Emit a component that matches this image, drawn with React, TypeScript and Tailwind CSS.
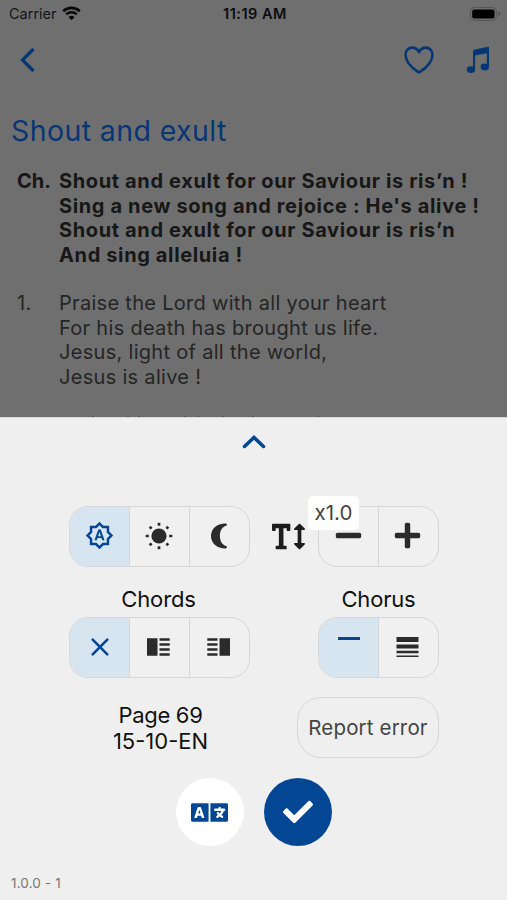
import type { ReactNode } from "react";
import clsx from "clsx";
import { FaCheck, FaLanguage, FaMinus, FaPlus, FaTextHeight } from "react-icons/fa";
import { IoHeartOutline } from "react-icons/io5";
import { MdOutlineBrightnessAuto } from "react-icons/md";

const CHORUS = [
  "Shout and exult for our Saviour is ris’n !",
  "Sing a new song and rejoice : He's alive !",
  "Shout and exult for our Saviour is ris’n",
  "And sing alleluia !",
];

const VERSE = [
  "Praise the Lord with all your heart",
  "For his death has brought us life.",
  "Jesus, light of all the world,",
  "Jesus is alive !",
];

function StatusBar() {
  return (
    <div className="grid h-7 grid-cols-3 items-center pl-[9px] pr-[6px] text-[14.5px] text-[#151515]">
      <div className="flex items-center gap-[5px]">
        <span>Carrier</span>
        <svg width="19" height="15" viewBox="0 0 19 15" fill="none" stroke="#080808" className="-mt-0.5">
          <path d="M1.2 5.2a12 12 0 0 1 16.6 0" strokeWidth="2.6" />
          <path d="M4.2 8.4a7.6 7.6 0 0 1 10.6 0" strokeWidth="2.4" />
          <path d="M9.5 14.2 6.5 11.2a4.3 4.3 0 0 1 6 0Z" fill="#080808" stroke="none" />
        </svg>
      </div>
      <span className="text-center font-semibold tracking-[0.5px] text-[#0c0c0c]">11:19 AM</span>
      <svg width="31" height="14" viewBox="0 0 31 14" className="justify-self-end">
        <rect x="0.5" y="0.5" width="26" height="13" rx="4" fill="#6f6f6f" stroke="#555" />
        <rect x="2.2" y="2.4" width="22.4" height="9" rx="2" fill="#000" />
        <path d="M28 4.6c1.8.6 2.4 1.4 2.4 2.4s-.6 1.8-2.4 2.4Z" fill="#555" />
      </svg>
    </div>
  );
}

function Stanza({ label, lines, bold }: { label: string; lines: string[]; bold?: boolean }) {
  return (
    <div
      className={clsx(
        "flex text-[20px] leading-[24.5px] whitespace-nowrap",
        bold ? "font-bold tracking-[0.63px] text-[#171717]" : "tracking-[0.3px] text-[#252525]"
      )}
    >
      <span className={clsx("w-[42px] shrink-0", bold && "tracking-normal")}>{label}</span>
      <div>
        {lines.map((line) => (
          <p key={line}>{line}</p>
        ))}
      </div>
    </div>
  );
}

function Segments({ items, active }: { items: ReactNode[]; active?: number }) {
  return (
    <div className="flex h-[61px] overflow-hidden rounded-[19px] border border-[#d6d6d6] bg-[#f0f0f0]">
      {items.map((item, i) => (
        <button
          key={i}
          className={clsx(
            "flex items-center justify-center pb-0.5",
            i > 0 ? "w-[60px] border-l border-[#d6d6d6] pr-0.5" : "w-[59px]",
            i === active ? "bg-[#d7e5f1] text-[#034694]" : "text-[#2b2b2b]"
          )}
        >
          {item}
        </button>
      ))}
    </div>
  );
}

function MusicIcon() {
  return (
    <svg width="24" height="28" viewBox="0 0 24 28" fill="currentColor" className="ml-[30px]">
      <path d="M7 5.2Q7 4.1 8 3.8L22 .7Q23 .5 23 1.6V21h-2.1V7.2L9.1 9.5V23.5H7Z" />
      <ellipse cx="4.9" cy="23.6" rx="4.2" ry="3.4" />
      <ellipse cx="18.8" cy="20.9" rx="4.2" ry="3.4" />
    </svg>
  );
}

function SunIcon() {
  return (
    <svg width="28" height="28" viewBox="-14 -14 28 28" fill="currentColor" stroke="currentColor">
      <circle r="7.6" stroke="none" />
      <path
        d="M0-10.2V-13.3M0 10.2V13.3M10.2 0H13.3M-10.2 0H-13.3M7.4-7.4 9.3-9.3M-7.4-7.4-9.3-9.3M7.4 7.4 9.3 9.3M-7.4 7.4-9.3 9.3"
        strokeWidth="2.7"
      />
    </svg>
  );
}

function MoonIcon() {
  return (
    <svg width="18" height="26" viewBox="0 0 18 26" fill="currentColor">
      <path d="M16.8 2.6V1.2a1 1 0 0 0-.8-.8C7.500 0 1 5.3 1 12.9S7.500 25.7 16 25.4a1 1 0 0 0 .8-.8V23.2C12 22 9.9 17.500 9.9 12.9S12 3.8 16.8 2.6Z" />
    </svg>
  );
}

function CrossIcon() {
  return (
    <svg width="18" height="18" viewBox="0 0 18 18" fill="none" stroke="currentColor" strokeWidth="2.5" strokeLinecap="round">
      <path d="m1.7 1.7 14.6 14.6M16.3 1.7 1.7 16.3" />
    </svg>
  );
}

function ColumnsIcon({ flip }: { flip?: boolean }) {
  return (
    <svg width="23" height="18" viewBox="0 0 23 18" fill="currentColor" className={clsx(flip && "-scale-x-100")}>
      <path d="M0 .2h10.5v17.6H0zM12.5.2H22.7v2.5H12.5zM12.5 5.2H22.7v2.5H12.5zM12.5 10.2H22.7v2.5H12.5zM12.5 15.3H22.7v2.5H12.5z" />
    </svg>
  );
}

function WeightIcon() {
  return (
    <svg width="23" height="22" viewBox="0 0 23 22" fill="currentColor">
      <path d="M.5 1h22v5H.5zM.5 8.5h22v4H.5zM.5 14.7h22v2.6H.5zM.5 19.6h22v1.3H.5z" />
    </svg>
  );
}

function SongPage() {
  return (
    <div className="flex h-[417px] flex-col overflow-hidden bg-[#6f6f6f]">
      <StatusBar />
      <header className="flex h-16 items-center pl-5 pr-[17px] text-[#073675]">
        <svg width="16" height="26" viewBox="0 0 16 26" fill="none" stroke="currentColor" strokeWidth="3.2">
          <path d="M13.5 2 2.5 13l11 11" />
        </svg>
        <IoHeartOutline size={36} className="-mr-px -mt-px ml-auto [&_path]:[stroke-width:37px]" />
        <MusicIcon />
      </header>
      <h1 className="mt-5 pl-[11px] text-[28.5px] leading-[38px] tracking-[0.4px] text-[#073675]">Shout and exult</h1>
      <div className="mt-[19px] flex flex-col gap-[24px] pl-[17px]">
        <Stanza label="Ch." lines={CHORUS} bold />
        <Stanza label="1." lines={VERSE} />
      </div>
      {/* tips of the next verse, just above the sheet */}
      <svg width="507" height="1" viewBox="0 0 507 1" stroke="#505050" strokeWidth="1" className="mt-auto shrink-0">
        <path d="M92 .5h2M127 .5h2M138 .5h2M184 .5h2M197 .5h2M222 .5h2M252 .5h2M317 .5h2" />
      </svg>
    </div>
  );
}

export default function App() {
  return (
    <div className="flex h-[900px] w-[507px] flex-col overflow-hidden bg-[#efefef] font-['Inter',sans-serif]">
      <SongPage />

      <section className="flex flex-1 flex-col border-t border-[#d9d9d9] text-[#111]">
        <button className="flex h-[88px] justify-center pt-4 text-[#034694]">
          <svg width="24" height="15" viewBox="0 0 24 15" fill="none" stroke="currentColor" strokeWidth="3.5" strokeLinecap="round">
            <path d="m2.5 12.5 9.5-9 9.5 9" />
          </svg>
        </button>

        <div className="flex items-center justify-between pl-[69px] pr-[68px]">
          <Segments
            active={0}
            items={[
              <MdOutlineBrightnessAuto size={29} />,
              <SunIcon />,
              <MoonIcon />,
            ]}
          />
          <div className="flex items-center">
            <FaTextHeight size={33} className="mr-[13px] text-[#1c1c1c]" />
            <div className="relative">
              <Segments items={[<FaMinus size={29} />, <FaPlus size={29} />]} />
              <span className="absolute -left-[10px] -top-[10px] flex h-[34px] w-[51px] items-center justify-center rounded-[5px] bg-white text-[20.5px] text-[#444]">
                x1.0
              </span>
            </div>
          </div>
        </div>

        <div className="mt-[17px] flex justify-between pl-[69px] pr-[68px]">
          <div className="flex flex-col items-center">
            <h2 className="h-[33px] pr-0.5 text-[22px] leading-[31px] tracking-[-0.1px]">Chords</h2>
            <Segments active={0} items={[<CrossIcon />, <ColumnsIcon />, <ColumnsIcon flip />]} />
          </div>
          <div className="flex flex-col items-center">
            <h2 className="h-[33px] text-[22px] leading-[31px] tracking-[-0.2px]">Chorus</h2>
            <Segments
              active={0}
              items={[<span className="mb-[17px] h-[3px] w-[22px] bg-[#034694]" />, <WeightIcon />]}
            />
          </div>
        </div>

        <div className="mt-[19px] flex justify-between pl-[69px] pr-[68px]">
          <p className="w-[183px] pt-[5px] text-center text-[22px] leading-[26px]">
            <span className="tracking-[-0.3px]">Page 69</span>
            <br />
            15-10-EN
          </p>
          <button className="h-[61px] w-[142px] rounded-[24px] border border-[#d6d6d6] pt-0.5 text-[20.5px] tracking-[0.15px] text-[#444]">
            Report error
          </button>
        </div>

        <div className="mt-5 flex justify-center gap-5">
          <button className="flex size-[68px] items-center justify-center rounded-full bg-white text-[#034694]">
            <FaLanguage size={37} />
          </button>
          <button className="flex size-[68px] items-center justify-center rounded-full bg-[#034694] text-white">
            <FaCheck size={30} />
          </button>
        </div>

        <p className="mt-auto pb-[7px] pl-[11px] text-[13.5px] leading-5 tracking-[0.15px] text-[#777]">1.0.0 - 1</p>
      </section>
    </div>
  );
}
